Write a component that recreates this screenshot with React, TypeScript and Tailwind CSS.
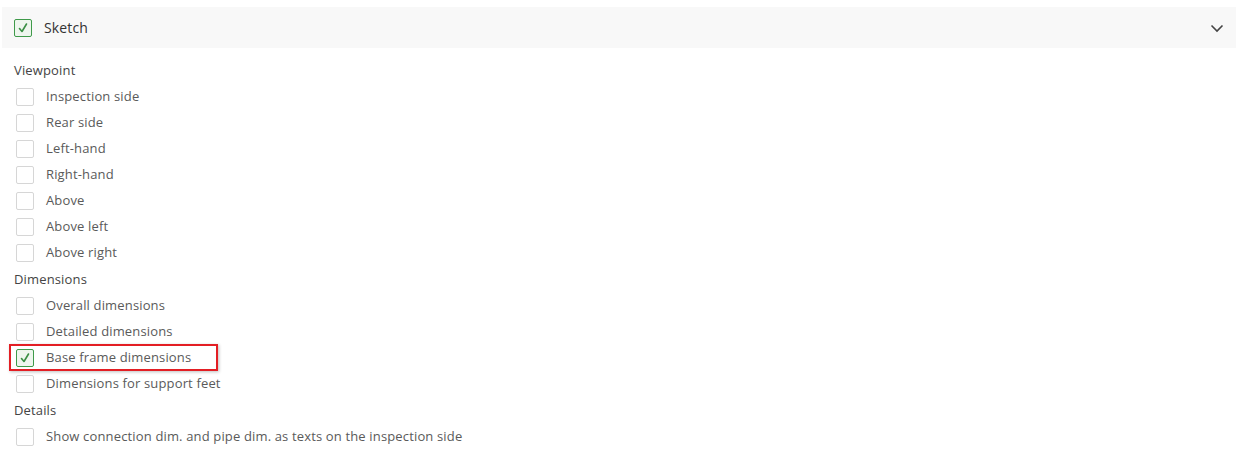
import React from "react";

type Item = { label: string; checked?: boolean; highlight?: boolean };

const groups: { title: string; items: Item[] }[] = [
  {
    title: "Viewpoint",
    items: [
      { label: "Inspection side" },
      { label: "Rear side" },
      { label: "Left-hand" },
      { label: "Right-hand" },
      { label: "Above" },
      { label: "Above left" },
      { label: "Above right" },
    ],
  },
  {
    title: "Dimensions",
    items: [
      { label: "Overall dimensions" },
      { label: "Detailed dimensions" },
      { label: "Base frame dimensions", checked: true, highlight: true },
      { label: "Dimensions for support feet" },
    ],
  },
  {
    title: "Details",
    items: [{ label: "Show connection dim. and pipe dim. as texts on the inspection side" }],
  },
];

const Box = ({ checked }: { checked?: boolean }) => (
  <span
    className={`w-[18px] h-[18px] rounded-[2px] border flex items-center justify-center shrink-0 ${
      checked ? "border-[#3f9a4a] bg-[#eef6ee]" : "border-[#d6d6d6] bg-white"
    }`}
  >
    {checked && (
      <svg width="12" height="12" viewBox="0 0 12 12" fill="none">
        <path d="M2.5 6.5 L5 9.5 L9.5 2" stroke="#3a8f44" strokeWidth="1.6" strokeLinecap="round" strokeLinejoin="round" />
      </svg>
    )}
  </span>
);

export default function App() {
  return (
    <div className="w-[1248px] h-[468px] bg-white pt-[7px] pl-[2px] pr-[12px] text-[13px] tracking-[0.15px] text-[#444]" style={{ fontFamily: "'Open Sans', Lato, sans-serif" }}>
      {/* Section header */}
      <div className="h-[41px] bg-[#f8f8f8] flex items-center pl-[12px] pr-[12px]">
        <Box checked />
        <span className="ml-[12px] text-[14px] text-[#333]">Sketch</span>
        <svg className="ml-auto" width="14" height="14" viewBox="0 0 14 14" fill="none">
          <path d="M1.5 4.5 L7 10 L12.5 4.5" stroke="#444" strokeWidth="1.6" />
        </svg>
      </div>

      <div className="pl-[12px] pt-[9px]">
        {groups.map((g) => (
          <div key={g.title}>
            <div className="h-[27px] flex items-center text-[#444]">{g.title}</div>
            {g.items.map((it) => (
              <div key={it.label} className="relative h-[26px] flex items-center pl-[2px]">
                {it.highlight && (
                  <span className="absolute left-[-5px] top-[-1px] w-[209px] h-[27px] border-2 border-[#e31e24] shadow-[1px_1px_3px_rgba(0,0,0,0.25)]" />
                )}
                <Box checked={it.checked} />
                <span className="ml-[12px] text-[#5a5a5a]">{it.label}</span>
              </div>
            ))}
          </div>
        ))}
      </div>
    </div>
  );
}
